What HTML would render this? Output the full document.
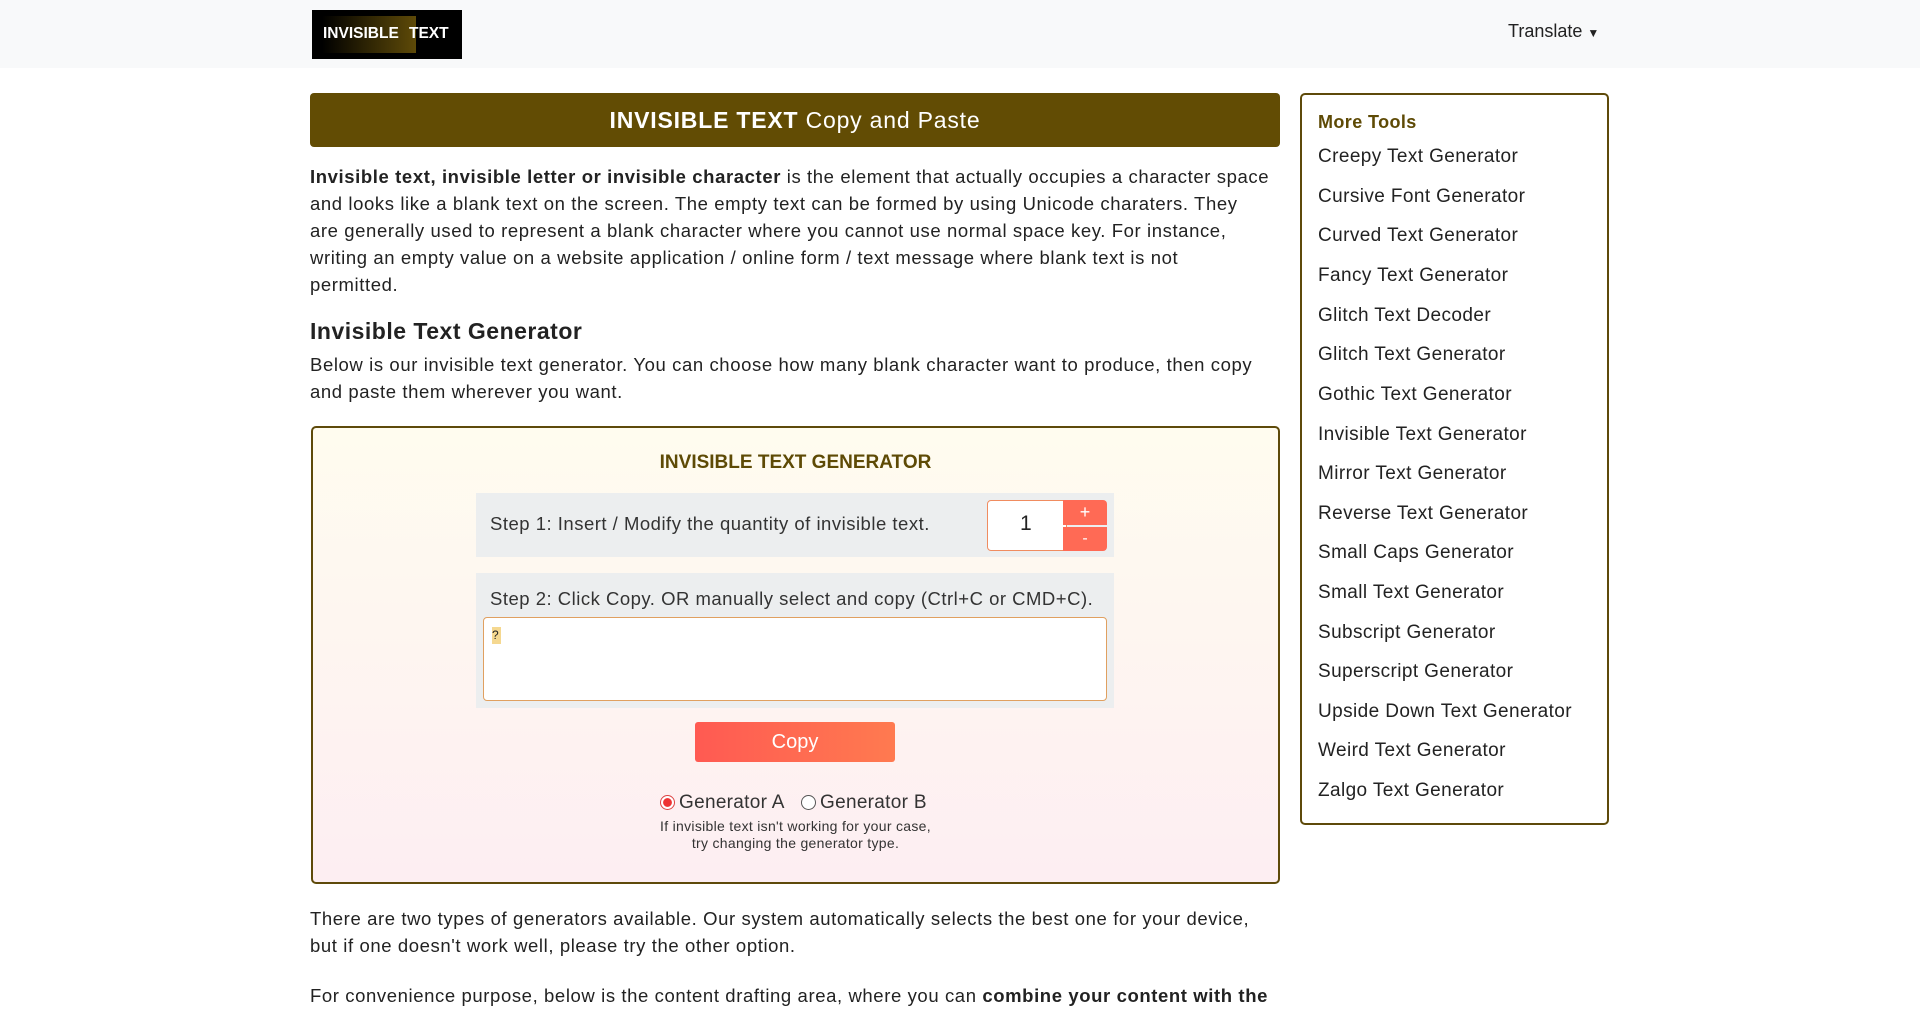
<!DOCTYPE html>
<html><head><meta charset="utf-8"><style>
*{box-sizing:border-box;margin:0;padding:0}
body{width:1920px;height:993px;overflow:hidden;background:#fff;font-family:"Liberation Sans",sans-serif;color:#222;position:relative}
.hdr{position:absolute;left:0;top:0;width:1920px;height:68px;background:#f8f9fa}
.logo{position:absolute;left:312px;top:10px;width:150px;height:49px;background:#000}
.logo .g{position:absolute;left:10px;top:6px;width:94px;height:37px;background:linear-gradient(90deg,#000,#5e4a08)}
.logo span{position:absolute;top:15px;color:#fff;font-weight:bold;font-size:15.5px}
.tr{position:absolute;left:1508px;top:21px;font-size:18px;color:#222}
.a{position:absolute;white-space:nowrap}
.title{position:absolute;left:310px;top:93px;width:970px;height:54px;background:#624c04;border-radius:4px;color:#fff;text-align:center;font-size:23px;line-height:54px;letter-spacing:.8px}
.p{font-size:18.5px;line-height:27px;color:#222;letter-spacing:.6px}
.gen{position:absolute;left:311px;top:426px;width:969px;height:458px;border:2px solid #5e4a0a;border-radius:5px;background:linear-gradient(#fffcef,#fdeef2)}
.side{position:absolute;left:1300px;top:93px;width:309px;height:732px;border:2px solid #5e4a0a;border-radius:5px;background:#fff}
.side div{position:absolute;left:16px;font-size:19px;color:#222;white-space:nowrap;letter-spacing:.4px}
</style></head><body>
<div class="hdr"></div>
<div class="logo"><div class="g"></div><span style="left:11px">INVISIBLE</span><span style="left:97px">TEXT</span></div>
<div class="tr">Translate <span style="font-size:12px">&#9660;</span></div>

<div class="title"><b>INVISIBLE TEXT</b> Copy and Paste</div>
<div class="a p" style="left:310px;top:163px"><b>Invisible text, invisible letter or invisible character</b> is the element that actually occupies a character space<br>and looks like a blank text on the screen. The empty text can be formed by using Unicode charaters. They<br>are generally used to represent a blank character where you cannot use normal space key. For instance,<br>writing an empty value on a website application / online form / text message where blank text is not<br>permitted.</div>
<div class="a" style="left:310px;top:318px;font-size:23px;font-weight:bold;color:#222;letter-spacing:.5px">Invisible Text Generator</div>
<div class="a p" style="left:310px;top:351px">Below is our invisible text generator. You can choose how many blank character want to produce, then copy<br>and paste them wherever you want.</div>

<div class="gen"></div>
<div class="a" style="left:311px;width:969px;text-align:center;top:452px;font-size:19px;font-weight:bold;color:#5e4a05">INVISIBLE TEXT GENERATOR</div>
<div class="a" style="left:476px;top:493px;width:638px;height:64px;background:#eceeef"></div>
<div class="a" style="left:490px;top:513px;font-size:18.5px;color:#333;letter-spacing:.5px">Step 1: Insert / Modify the quantity of invisible text.</div>
<div class="a" style="left:987px;top:500px;width:80px;height:51px;background:#fff;border:1px solid #f08c60;border-radius:4px"></div>
<div class="a" style="left:1020px;top:512px;font-size:21px">1</div>
<div class="a" style="left:1063px;top:500px;width:44px;height:25px;background:#ff6a55;border-radius:0 4px 0 0;color:#fff;text-align:center;font-size:18px;line-height:24px">+</div>
<div class="a" style="left:1063px;top:527px;width:44px;height:24px;background:#ff6a55;border-radius:0 0 4px 0;color:#fff;text-align:center;font-size:16px;line-height:24px">-</div>
<div class="a" style="left:476px;top:573px;width:638px;height:135px;background:#eceeef"></div>
<div class="a" style="left:490px;top:588px;font-size:18.5px;color:#333;letter-spacing:.5px">Step 2: Click Copy. OR manually select and copy (Ctrl+C or CMD+C).</div>
<div class="a" style="left:483px;top:617px;width:624px;height:84px;background:#fff;border:1px solid #e0a060;border-radius:4px"></div>
<div class="a" style="left:492px;top:627px;width:9px;height:17px;background:#f5d890;font-size:12px;line-height:17px">?</div>
<div class="a" style="left:695px;top:722px;width:200px;height:40px;background:linear-gradient(90deg,#ff5a52,#ff7a50);border-radius:3px;color:#fff;text-align:center;line-height:40px;font-size:20px">Copy</div>
<div class="a" style="left:660px;top:795px;width:15px;height:15px;border-radius:50%;border:1px solid #d44;background:radial-gradient(#e33 45%,#fff 50%)"></div>
<div class="a" style="left:679px;top:792px;font-size:19px;color:#333;letter-spacing:.3px">Generator A</div>
<div class="a" style="left:801px;top:795px;width:15px;height:15px;border-radius:50%;border:1px solid #555;background:#fff"></div>
<div class="a" style="left:820px;top:792px;font-size:19px;color:#333;letter-spacing:.3px">Generator B</div>
<div class="a" style="left:311px;width:969px;text-align:center;top:818px;font-size:14px;line-height:17px;color:#333;letter-spacing:.3px">If invisible text isn't working for your case,<br>try changing the generator type.</div>
<div class="a p" style="left:310px;top:905px">There are two types of generators available. Our system automatically selects the best one for your device,<br>but if one doesn't work well, please try the other option.</div>
<div class="a p" style="left:310px;top:982px">For convenience purpose, below is the content drafting area, where you can <b>combine your content with the</b></div>

<div class="side">
<div style="top:17px;color:#5e4a05;font-weight:bold;font-size:18px">More Tools</div>
<div style="top:51px">Creepy Text Generator</div>
<div style="top:91px">Cursive Font Generator</div>
<div style="top:130px">Curved Text Generator</div>
<div style="top:170px">Fancy Text Generator</div>
<div style="top:210px">Glitch Text Decoder</div>
<div style="top:249px">Glitch Text Generator</div>
<div style="top:289px">Gothic Text Generator</div>
<div style="top:329px">Invisible Text Generator</div>
<div style="top:368px">Mirror Text Generator</div>
<div style="top:408px">Reverse Text Generator</div>
<div style="top:447px">Small Caps Generator</div>
<div style="top:487px">Small Text Generator</div>
<div style="top:527px">Subscript Generator</div>
<div style="top:566px">Superscript Generator</div>
<div style="top:606px">Upside Down Text Generator</div>
<div style="top:645px">Weird Text Generator</div>
<div style="top:685px">Zalgo Text Generator</div>
</div>
</body></html>
